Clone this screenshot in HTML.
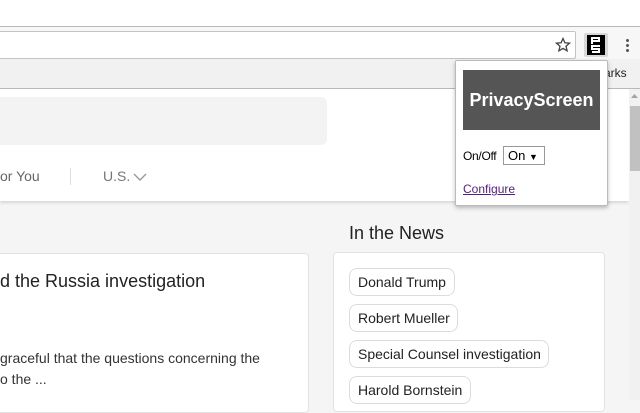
<!DOCTYPE html>
<html><head><style>
*{margin:0;padding:0;box-sizing:border-box}
body{width:640px;height:400px;overflow:hidden;position:relative;background:#f5f5f5;font-family:"Liberation Sans",Arial,sans-serif}
.a{position:absolute}
.chip{position:absolute;left:349px;height:28px;border:1px solid #dadce0;border-radius:8px;background:#fff;font-size:14px;color:#222;line-height:26px;padding-left:8px}
</style></head><body>
<div class="a" style="left:0;top:0;width:640px;height:26px;background:#fff"></div>
<div class="a" style="left:0;top:26px;width:640px;height:1px;background:#b9b9b9"></div>
<div class="a" style="left:0;top:27px;width:640px;height:32px;background:#f7f7f7"></div>
<div class="a" style="left:-4px;top:31px;width:580px;height:28px;background:#fff;border:1px solid #c4c4c4;border-radius:2px"></div>
<svg class="a" style="left:555px;top:37px" width="16" height="16" viewBox="0 0 16 16"><path d="M8 1.5l1.9 4.3 4.6.4-3.5 3 1.1 4.6L8 11.4l-4.1 2.4L5 9.2l-3.5-3 4.6-.4z" fill="none" stroke="#444" stroke-width="1.3"/></svg>
<div class="a" style="left:584px;top:33px;width:24px;height:24px;background:#d8d8d8;border-radius:2px"></div>
<div class="a" style="left:587px;top:35px;width:18px;height:20px;background:#000"></div>
<svg class="a" style="left:591px;top:37px" width="10" height="16"><path d="M1 7V1h7v3H1M9 9H1v3h7v3H1" fill="none" stroke="#fff" stroke-width="2"/></svg>
<div class="a" style="left:626px;top:39px;width:3px;height:3px;background:#555;box-shadow:0 5px 0 #555,0 10px 0 #555;border-radius:50%"></div>
<div class="a" style="left:0;top:59px;width:640px;height:29px;background:#f1f1f1"></div>
<div class="a" style="left:604px;top:66px;font-size:12px;color:#222">arks</div>
<div class="a" style="left:0;top:88px;width:640px;height:1px;background:#b9b9b9"></div>
<div class="a" style="left:0;top:89px;width:629px;height:112px;background:#fff;box-shadow:0 2px 3px rgba(0,0,0,.12)"></div>
<div class="a" style="left:-10px;top:97px;width:337px;height:48px;background:#f3f3f3;border-radius:6px"></div>
<div class="a" style="left:0;top:168px;font-size:14px;color:#666">or You</div>
<div class="a" style="left:70px;top:168px;width:1px;height:17px;background:#ddd"></div>
<div class="a" style="left:103px;top:168px;font-size:14px;color:#777">U.S.</div>
<svg class="a" style="left:133px;top:172px" width="14" height="10"><path d="M1 2l6 6 6-6" fill="none" stroke="#999" stroke-width="1.4"/></svg>
<div class="a" style="left:-10px;top:253px;width:319px;height:160px;background:#fff;border:1px solid #e2e2e2;border-radius:4px"></div>
<div class="a" style="left:0;top:271px;font-size:18px;color:#222">d the Russia investigation</div>
<div class="a" style="left:0;top:348px;font-size:14px;line-height:21px;color:#333">graceful that the questions concerning the<br>o the ...</div>
<div class="a" style="left:349px;top:223px;font-size:18px;color:#222">In the News</div>
<div class="a" style="left:333px;top:252px;width:272px;height:160px;background:#fff;border:1px solid #e2e2e2;border-radius:4px"></div>
<div class="chip" style="top:268px;width:106px">Donald Trump</div>
<div class="chip" style="top:304px;width:109px">Robert Mueller</div>
<div class="chip" style="top:340px;width:200px">Special Counsel investigation</div>
<div class="chip" style="top:376px;width:122px">Harold Bornstein</div>
<div class="a" style="left:629px;top:89px;width:11px;height:311px;background:#f1f1f1"></div>
<svg class="a" style="left:630px;top:93px" width="9" height="6"><path d="M1 5l3.5-4 3.5 4z" fill="#a3a3a3"/></svg>
<div class="a" style="left:630px;top:106px;width:10px;height:65px;background:#c1c1c1"></div>
<div class="a" style="left:455px;top:60px;width:153px;height:146px;background:#fff;border:1px solid #bbb;border-radius:2px;box-shadow:0 2px 4px rgba(0,0,0,.25)"></div>
<div class="a" style="left:463px;top:70px;width:137px;height:60px;background:#555;color:#fff;font:bold 18px/60px 'Liberation Sans',sans-serif;text-align:center">PrivacyScreen</div>
<div class="a" style="left:463px;top:149px;font-size:12px;color:#000;letter-spacing:-0.3px">On/Off</div>
<div class="a" style="left:503px;top:146px;width:42px;height:19px;border:1px solid #999;background:#fff;font-size:13px;line-height:17px;padding-left:4px">On <span style="font-size:9px">▼</span></div>
<div class="a" style="left:463px;top:182px;font-size:12px;color:#551a8b;text-decoration:underline">Configure</div>
</body></html>
